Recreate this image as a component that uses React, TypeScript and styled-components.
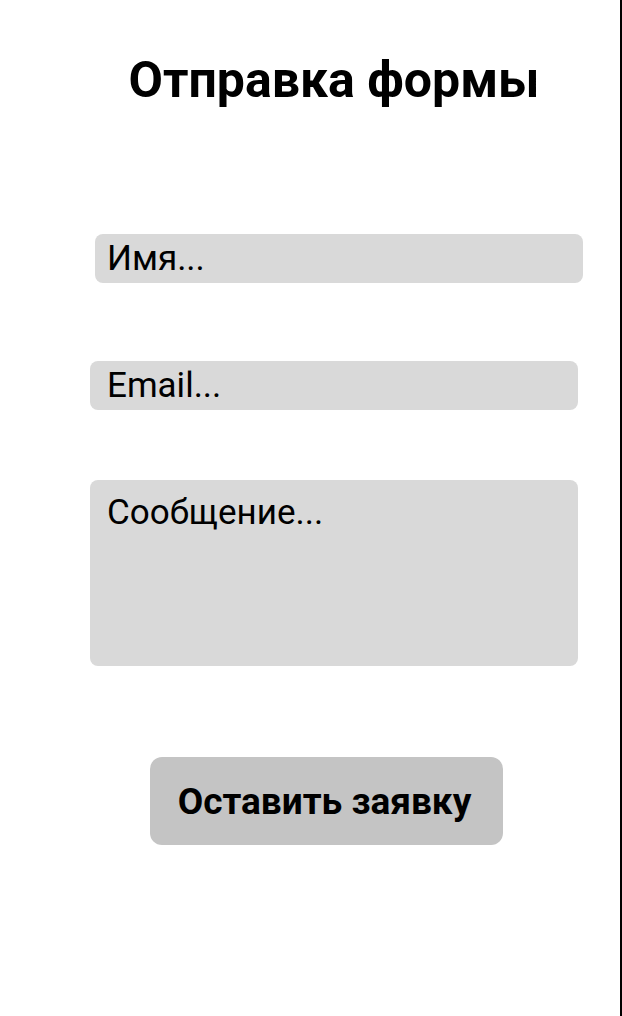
import React from 'react';
import styled, { createGlobalStyle } from 'styled-components';

const GlobalStyle = createGlobalStyle`
  html, body {
    margin: 0;
    padding: 0;
    background: #ffffff;
    font-family: Roboto, "Liberation Sans", sans-serif;
  }
`;

const Page = styled.div`
  width: 620px;
  min-height: 1016px;
  border-right: 2px solid #000000;
  background: #ffffff;
`;

const Form = styled.form`
  width: 488px;
  margin-left: 90px;
  padding-top: 52px;
  display: flex;
  flex-direction: column;
`;

const Title = styled.h1`
  margin: 0;
  text-align: center;
  font-size: 50px;
  font-weight: 700;
  line-height: 56px;
  color: #000000;
`;

const field = `
  box-sizing: border-box;
  width: 488px;
  border: none;
  outline: none;
  border-radius: 8px;
  background: #d9d9d9;
  font-family: Roboto, "Liberation Sans", sans-serif;
  font-size: 35px;
  color: #000000;

  &::placeholder {
    color: #000000;
    opacity: 1;
  }
`;

const Input = styled.input<{ $top: number; $shift?: number }>`
  ${field}
  height: 49px;
  margin-top: ${(p) => p.$top}px;
  margin-left: ${(p) => p.$shift || 0}px;
  padding: 0 ${(p) => 17 - (p.$shift || 0)}px;
`;

const Message = styled.textarea`
  ${field}
  height: 186px;
  margin-top: 70px;
  padding: 13px 17px;
  resize: none;
  line-height: 40px;
`;

const Submit = styled.button`
  align-self: flex-start;
  width: 353px;
  height: 88px;
  margin-top: 91px;
  margin-left: 60px;
  padding: 0 4px 0 0;
  border: none;
  border-radius: 12px;
  background: #c4c4c4;
  font-family: Roboto, "Liberation Sans", sans-serif;
  font-size: 37px;
  font-weight: 700;
  color: #000000;
  cursor: pointer;
`;

export default function App() {
  return (
    <Page>
      <GlobalStyle />
      <Form onSubmit={(e) => e.preventDefault()}>
        <Title>Отправка формы</Title>
        <Input $top={126} $shift={5} placeholder='Имя...' />
        <Input $top={78} type='email' placeholder='Email...' />
        <Message placeholder='Сообщение...' />
        <Submit type='submit'>Оставить заявку</Submit>
      </Form>
    </Page>
  );
}
